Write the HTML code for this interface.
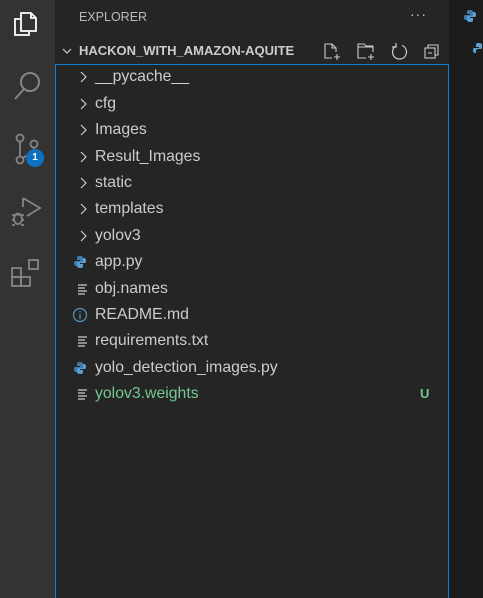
<!DOCTYPE html>
<html><head><meta charset="utf-8"><style>
*{margin:0;padding:0;box-sizing:border-box}
body{width:483px;height:598px;overflow:hidden;background:#1c1c1c;font-family:"Liberation Sans","DejaVu Sans",sans-serif;position:relative}
#act{position:absolute;left:0;top:0;width:55px;height:598px;background:#333333}
#side{position:absolute;left:55px;top:0;width:394px;height:598px;background:#252526}
#ed{position:absolute;left:449px;top:0;width:34px;height:598px;background:#1c1c1c}
.t{position:absolute;color:#ccc}
#focus{position:absolute;left:55px;top:64px;width:394px;height:534px;border:1px solid #0f7fd6;border-bottom:none}
.row{position:absolute;left:0;height:26px;line-height:26px;font-size:15.8px;color:#cccccc}
.row .n{position:absolute;left:40px;top:0;white-space:nowrap}
svg{position:absolute}
</style></head><body>
<div id="act"></div>
<div id="side"></div>
<div id="ed"></div>

<svg style="left:12px;top:9px" width="28" height="30" viewBox="0 0 28 30" fill="none" stroke="#fff" stroke-width="1.8"><path d="M9 4h10l5 5v13H9z"/><path d="M19 4v5h5"/><path d="M9 10H3v16h14v-4"/></svg>
<svg style="left:12px;top:70px" width="30" height="32" viewBox="0 0 30 32" fill="none" stroke="#858585" stroke-width="2"><circle cx="18" cy="12" r="9"/><path d="M12 19L3 29"/></svg>
<svg style="left:13px;top:133px" width="30" height="34" viewBox="0 0 30 34" fill="none" stroke="#858585" stroke-width="1.8"><circle cx="7" cy="5" r="3.5"/><circle cx="7" cy="27" r="3.5"/><circle cx="21" cy="11" r="3.5"/><path d="M7 9v14M21 15c0 6-8 7-11 10"/></svg>
<div style="position:absolute;left:26px;top:149px;width:18px;height:18px;border-radius:50%;background:#0e70c0;color:#fff;font-size:10px;font-weight:bold;text-align:center;line-height:18px">1</div>
<svg style="left:10px;top:194px" width="32" height="34" viewBox="0 0 32 34" fill="none" stroke="#858585" stroke-width="1.8"><path d="M13 4l17 10-13 8"/><path d="M13 4v9"/><ellipse cx="8" cy="25" rx="4" ry="5"/><path d="M2 21h3M2 26h2M2 31h3M11 21h3M12 26h2M11 31h3M6 19l2 2 2-2"/></svg>
<svg style="left:10px;top:258px" width="32" height="32" viewBox="0 0 32 32" fill="none" stroke="#858585" stroke-width="1.8"><rect x="2" y="10" width="9" height="9"/><rect x="2" y="19" width="9" height="9"/><rect x="11" y="19" width="9" height="9"/><rect x="19" y="2" width="9" height="9"/></svg>

<div class="t" style="left:79px;top:10px;font-size:12.5px;color:#bbbbbb">EXPLORER</div>
<div class="t" style="left:410px;top:6px;font-size:14px;letter-spacing:1px;color:#ccc">···</div>
<svg style="left:61px;top:45px" width="12" height="12" viewBox="0 0 12 12" fill="none" stroke="#ccc" stroke-width="1.2"><path d="M2 4l4 4 4-4"/></svg>
<div class="t" style="left:79px;top:43px;font-size:13px;font-weight:bold;color:#cccccc">HACKON_WITH_AMAZON-AQUITE</div>
<svg style="left:323px;top:42px" width="20" height="20" viewBox="0 0 20 20" fill="none" stroke="#ccc" stroke-width="1.1"><path d="M9 16H2V2h7l4 4v4"/><path d="M9 2v4h4M14 12v6M11 15h6"/></svg>
<svg style="left:356px;top:42px" width="22" height="20" viewBox="0 0 22 20" fill="none" stroke="#ccc" stroke-width="1.1"><path d="M10 16H2V2h6l2 2h7v6"/><path d="M2 5h15M15 12v6M12 15h6"/></svg>
<svg style="left:390px;top:42px" width="20" height="20" viewBox="0 0 20 20" fill="none" stroke="#ccc" stroke-width="1.2"><path d="M6 4A7 7 0 1 0 12 3.5"/><path d="M6 1v4H2"/></svg>
<svg style="left:423px;top:42px" width="18" height="18" viewBox="0 0 18 18" fill="none" stroke="#ccc" stroke-width="1.1"><rect x="2" y="6" width="10" height="10"/><path d="M5 6V3h10v10h-3M5 11h4"/></svg>

<div id="focus"></div>

<div style="position:absolute;left:55px;top:0">
<div class="row" style="top:64px"><svg style="left:23px;top:7px" width="10" height="12" viewBox="0 0 10 12" fill="none" stroke="#ccc" stroke-width="1.2"><path d="M3 1l5 5-5 5"/></svg><span class="n">__pycache__</span></div>
<div class="row" style="top:91px"><svg style="left:23px;top:7px" width="10" height="12" viewBox="0 0 10 12" fill="none" stroke="#ccc" stroke-width="1.2"><path d="M3 1l5 5-5 5"/></svg><span class="n">cfg</span></div>
<div class="row" style="top:117px"><svg style="left:23px;top:7px" width="10" height="12" viewBox="0 0 10 12" fill="none" stroke="#ccc" stroke-width="1.2"><path d="M3 1l5 5-5 5"/></svg><span class="n">Images</span></div>
<div class="row" style="top:144px"><svg style="left:23px;top:7px" width="10" height="12" viewBox="0 0 10 12" fill="none" stroke="#ccc" stroke-width="1.2"><path d="M3 1l5 5-5 5"/></svg><span class="n">Result_Images</span></div>
<div class="row" style="top:170px"><svg style="left:23px;top:7px" width="10" height="12" viewBox="0 0 10 12" fill="none" stroke="#ccc" stroke-width="1.2"><path d="M3 1l5 5-5 5"/></svg><span class="n">static</span></div>
<div class="row" style="top:196px"><svg style="left:23px;top:7px" width="10" height="12" viewBox="0 0 10 12" fill="none" stroke="#ccc" stroke-width="1.2"><path d="M3 1l5 5-5 5"/></svg><span class="n">templates</span></div>
<div class="row" style="top:223px"><svg style="left:23px;top:7px" width="10" height="12" viewBox="0 0 10 12" fill="none" stroke="#ccc" stroke-width="1.2"><path d="M3 1l5 5-5 5"/></svg><span class="n">yolov3</span></div>
<div class="row" style="top:249px"><svg style="left:18px;top:6px" width="14" height="14" viewBox="0 0 14 14"><path d="M7 1C4 1 4 2 4 3v2h3v1H2C1 6 1 8 1 9s1 2 2 2h1V9c0-1 1-2 2-2h3c1 0 1-1 1-2V3c0-1-1-2-3-2z" fill="#3f7cac"/><path d="M7 13c3 0 3-1 3-2V9H7V8h5c1 0 1-2 1-3s-1-2-2-2h-1v2c0 1-1 2-2 2H5c-1 0-1 1-1 2v2c0 1 1 2 3 2z" fill="#5a9fd4"/></svg><span class="n">app.py</span></div>
<div class="row" style="top:276px"><svg style="left:22px;top:7px" width="12" height="12" viewBox="0 0 12 12" stroke="#ccc" stroke-width="1.2"><path d="M1 2h9M1 5h7M1 8h9M1 11h7"/></svg><span class="n">obj.names</span></div>
<div class="row" style="top:302px"><svg style="left:17px;top:5px" width="16" height="16" viewBox="0 0 16 16" fill="none" stroke="#519aba" stroke-width="1.2"><circle cx="8" cy="8" r="6.5"/><path d="M8 7v5M8 4v1.5"/></svg><span class="n">README.md</span></div>
<div class="row" style="top:328px"><svg style="left:22px;top:7px" width="12" height="12" viewBox="0 0 12 12" stroke="#ccc" stroke-width="1.2"><path d="M1 2h9M1 5h7M1 8h9M1 11h7"/></svg><span class="n">requirements.txt</span></div>
<div class="row" style="top:355px"><svg style="left:18px;top:6px" width="14" height="14" viewBox="0 0 14 14"><path d="M7 1C4 1 4 2 4 3v2h3v1H2C1 6 1 8 1 9s1 2 2 2h1V9c0-1 1-2 2-2h3c1 0 1-1 1-2V3c0-1-1-2-3-2z" fill="#3f7cac"/><path d="M7 13c3 0 3-1 3-2V9H7V8h5c1 0 1-2 1-3s-1-2-2-2h-1v2c0 1-1 2-2 2H5c-1 0-1 1-1 2v2c0 1 1 2 3 2z" fill="#5a9fd4"/></svg><span class="n">yolo_detection_images.py</span></div>
<div class="row" style="top:381px;width:394px"><svg style="left:22px;top:7px" width="12" height="12" viewBox="0 0 12 12" stroke="#ccc" stroke-width="1.2"><path d="M1 2h9M1 5h7M1 8h9M1 11h7"/></svg><span class="n" style="color:#73c991">yolov3.weights</span><span style="position:absolute;left:365px;color:#73c991;font-weight:bold;font-size:13px">U</span></div>
</div>

<svg style="left:463px;top:9px" width="14" height="14" viewBox="0 0 14 14"><path d="M7 1C4 1 4 2 4 3v2h3v1H2C1 6 1 8 1 9s1 2 2 2h1V9c0-1 1-2 2-2h3c1 0 1-1 1-2V3c0-1-1-2-3-2z" fill="#3f7cac"/><path d="M7 13c3 0 3-1 3-2V9H7V8h5c1 0 1-2 1-3s-1-2-2-2h-1v2c0 1-1 2-2 2H5c-1 0-1 1-1 2v2c0 1 1 2 3 2z" fill="#5a9fd4"/></svg>
<svg style="left:472px;top:42px" width="14" height="14" viewBox="0 0 14 14"><path d="M7 1C4 1 4 2 4 3v2h3v1H2C1 6 1 8 1 9s1 2 2 2h1V9c0-1 1-2 2-2h3c1 0 1-1 1-2V3c0-1-1-2-3-2z" fill="#5a9fd4"/></svg>
</body></html>
